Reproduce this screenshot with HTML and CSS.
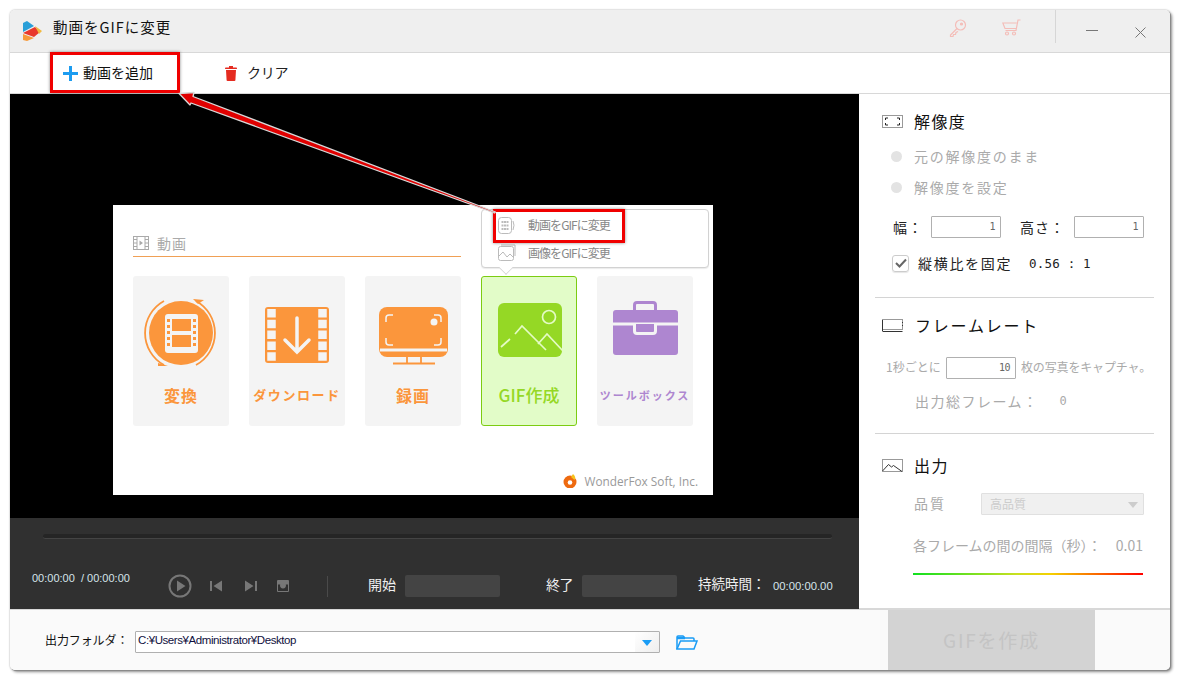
FILE: index.html
```html
<!DOCTYPE html>
<html lang="ja">
<head>
<meta charset="utf-8">
<title>動画をGIFに変更</title>
<link rel="stylesheet" href="styles.css">
</head>
<body>
<div class="window">
  <header class="titlebar">
    <svg class="logo" viewBox="0 0 20 20">
      <polygon points="1,2 5,0 12,5 1,11" fill="#2a9fd8"/>
      <polygon points="1,12 13,6 18,11 12,16" fill="#e8382c"/>
      <polygon points="1,13 12,17 5,20 1,19" fill="#f79a3a"/>
      <polygon points="13,5 20,10 17,13" fill="#f2b93f"/>
    </svg>
    <span class="title">動画をGIFに変更</span>
    <svg class="tb-key" viewBox="0 0 18 18" fill="none" stroke="#f4bdb8" stroke-width="1.2">
      <circle cx="11.5" cy="6" r="5"/><circle cx="12.5" cy="5" r="1" fill="#f4bdb8"/>
      <path d="M8 9.5 1.5 16v1.5h2.500l.5-2h2l.5-2 2-1"/>
    </svg>
    <svg class="tb-cart" viewBox="0 0 19 17" fill="none" stroke="#f4bdb8" stroke-width="1.200">
      <path d="M18.500 1h-2.500l-2 10.500H3.500"/><path d="M14.800 4H.8l2.200 5.500h11"/>
      <circle cx="5" cy="14.500" r="1.500"/><circle cx="12" cy="14.500" r="1.500"/>
    </svg>
    <i class="tb-sep"></i>
    <i class="tb-min"></i>
    <svg class="tb-close" viewBox="0 0 11 11" stroke="#777" stroke-width="1"><path d="M.5.5l10 10M10.500.5l-10 10"/></svg>
  </header>

  <nav class="toolbar">
    <svg class="ic-plus" viewBox="0 0 15 15"><path d="M6 0h3v6h6v3H9v6H6V9H0V6h6z" fill="#1c9cf0"/></svg>
    <span class="tool-add">動画を追加</span>
    <svg class="ic-trash" viewBox="0 0 12 15"><path d="M4 0h4v1.500h3.500q.5 0 .5 1.500H0q0-1.500.5-1.500H4zM1 4h10l-.6 10.200q0 .8-1 .8H2.600q-1 0-1-.8z" fill="#e52b20"/></svg>
    <span class="tool-clear">クリア</span>
  </nav>

  <main class="main">
    <section class="left">
      <div class="video">
        <div class="shot">
          <div class="shot-head">
            <svg class="ic-film" viewBox="0 0 16 14" fill="none" stroke="#aaa"><rect x=".5" y=".5" width="15" height="13"/><path d="M4 .5v13M12 .5v13M.5 3.500H4M.5 7H4M.5 10.500H4M12 3.500h3.500M12 7h3.500M12 10.500h3.500"/><path d="M6.500 4.500v5l3.500-2.500z" fill="#aaa" stroke="none"/></svg>
            <span>動画</span>
          </div>
          <div class="tiles">
            <div class="tile orange">
              <svg class="tile-ic" viewBox="0 0 96 66">
                <circle cx="48" cy="35" r="32" fill="#fb963c"/>
                <path d="M31 3A36.500 36.500 0 0 0 31 67M63 3A36.500 36.500 0 0 1 63 67" fill="none" stroke="#fb963c" stroke-width="1.800"/>
                <polygon points="60,1 71,2 65,6" fill="#fb963c"/><polygon points="25,65 35,68 25,68" fill="#fb963c"/>
                <rect x="32" y="16" width="33" height="39" rx="3" fill="#f4f4f4"/>
                <rect x="39" y="21" width="19" height="12" fill="#fb963c"/><rect x="39" y="37" width="19" height="12" fill="#fb963c"/>
                <path d="M35.500 21v28M61.500 21v28" stroke="#fb963c" stroke-width="3" stroke-dasharray="3 3" fill="none"/>
              </svg>
              <span class="tile-label big">変換</span>
            </div>
            <div class="tile orange">
              <svg class="tile-ic" viewBox="0 0 96 66">
                <rect x="16" y="9" width="64" height="56" rx="3" fill="#fb963c"/>
                <path d="M22.500 11v52M73.500 11v52" stroke="#f4f4f4" stroke-width="8.500" stroke-dasharray="8.500 2.300" fill="none"/>
                <path d="M48 20v34M36 42l12 12 12-12" stroke="#f4f4f4" stroke-width="3.500" stroke-linecap="round" fill="none"/>
              </svg>
              <span class="tile-label dl">ダウンロード</span>
            </div>
            <div class="tile orange">
              <svg class="tile-ic" viewBox="0 0 96 66">
                <rect x="14" y="9" width="69" height="50" rx="8" fill="#fb963c"/>
                <path d="M15 52h67" stroke="#f4f4f4" stroke-width="3"/>
                <path d="M42 59v6M56 59v6M28 65.500h42" stroke="#fb963c" stroke-width="1.800"/>
                <path d="M21 24v-4q0-3 3-3h4M76 24v-4q0-3-3-3h-4M21 40v4q0 3 3 3h4M76 40v4q0 3-3 3h-4" stroke="#f4f4f4" stroke-width="1.500" fill="none"/>
                <circle cx="69" cy="24" r="3.500" fill="#f4f4f4"/>
              </svg>
              <span class="tile-label big">録画</span>
            </div>
            <div class="tile active">
              <svg class="tile-ic" viewBox="0 0 96 66">
                <rect x="17" y="5" width="64" height="54" rx="6" fill="#95d825"/>
                <circle cx="68" cy="19" r="6.500" fill="none" stroke="#e4fbc5" stroke-width="1.700"/>
                <path d="M20 49l9-8M34 36l7-8 24 24M57 46l9-10 16 17" fill="none" stroke="#e4fbc5" stroke-width="1.700"/>
              </svg>
              <span class="tile-label gif">GIF作成</span>
            </div>
            <div class="tile purple">
              <svg class="tile-ic" viewBox="0 0 96 66">
                <path d="M37.500 12V7q0-2.500 2.500-2.500h16q2.500 0 2.500 2.500v5" fill="none" stroke="#ae86d0" stroke-width="3"/>
                <rect x="16" y="12" width="65" height="45" rx="3" fill="#ae86d0"/>
                <path d="M16 26h65" stroke="#f4f4f4" stroke-width="3"/>
                <path d="M37.500 26v7q0 2.500 2.500 2.500h16q2.500 0 2.500-2.500v-7" fill="#ae86d0" stroke="#f4f4f4" stroke-width="3"/>
              </svg>
              <span class="tile-label tool">ツールボックス</span>
            </div>
          </div>
          <div class="brand">
            <svg class="brand-ic" viewBox="0 0 14 14"><circle cx="7" cy="8" r="6.500" fill="#ee6a10"/><circle cx="7" cy="8.500" r="2.300" fill="#fff"/><path d="M10 0q3.500 3 1.500 6L8 3z" fill="#f6c21c"/></svg>
            <span>WonderFox Soft, Inc.</span>
          </div>
          <div class="popup">
            <div class="pop-row">
              <svg class="pop-ic" viewBox="0 0 18 17" fill="none" stroke="#bbb"><rect x=".5" y=".5" width="13" height="16" rx="3"/><path d="M4.500 4v9M7 4v9M9.500 4v9" stroke-width="2" stroke-dasharray="2 1.500"/><path d="M15 4q2 4 0 9"/></svg>
              <span>動画をGIFに変更</span>
            </div>
            <div class="pop-row">
              <svg class="pop-ic" viewBox="0 0 18 17" fill="none" stroke="#bbb"><rect x=".5" y="2.500" width="15" height="14" rx="2"/><path d="M1 12l4-4 4 5 3-3 3 3M3 1h14v11"/></svg>
              <span>画像をGIFに変更</span>
            </div>
            <i class="pop-tail"></i>
          </div>
        </div>
      </div>
      <div class="controls">
        <div class="seek"></div>
        <div class="ctl-row">
          <span class="time">00:00:00 &nbsp;/ 00:00:00</span>
          <svg class="ic-play" viewBox="0 0 24 24" fill="none"><circle cx="12" cy="12" r="10.500" stroke="#777" stroke-width="2"/><path d="M9 6.500v11l8.500-5.500z" fill="#777"/></svg>
          <svg class="ic-prev" viewBox="0 0 12 12"><path d="M0 1h2v10H0zM12 .5v11L3.500 6z" fill="#777"/></svg>
          <svg class="ic-next" viewBox="0 0 12 12"><path d="M12 1h-2v10h2zM0 .5v11L8.500 6z" fill="#777"/></svg>
          <svg class="ic-cam" viewBox="0 0 12 12"><path d="M1 0h10q1 0 1 1v10q0 1-1 1H1q-1 0-1-1V1q0-1 1-1zm0 4.500V11h10V4.500H8.800a3 3 0 1 1-5.600 0z" fill="#777" fill-rule="evenodd"/><circle cx="6" cy="6" r="1.500" fill="#777"/></svg>
          <i class="ctl-sep"></i>
          <span class="ctl-start">開始</span>
          <span class="ctl-field f-start"></span>
          <span class="ctl-end">終了</span>
          <span class="ctl-field f-end"></span>
          <span class="ctl-dur">持続時間：</span>
          <span class="ctl-durv">00:00:00.00</span>
        </div>
      </div>
    </section>

    <aside class="panel">
      <div class="sec s1">
        <div class="head">
          <svg class="head-ic" viewBox="0 0 21 13" fill="none" stroke="#999"><rect x=".5" y=".5" width="20" height="12"/><path d="M6 3H3.500v2M15 3h2.500v2M6 10H3.500V8M15 10h2.500V8" stroke="#222"/></svg>
          <span class="h-text">解像度</span>
        </div>
        <label class="radio r1"><i class="dot"></i>元の解像度のまま</label>
        <label class="radio r2"><i class="dot"></i>解像度を設定</label>
        <div class="dims">
          <span class="d-w">幅：</span><span class="num">1</span>
          <span class="d-h">高さ：</span><span class="num">1</span>
        </div>
        <div class="lock">
          <span class="chk"><svg viewBox="0 0 12 10" fill="none" stroke="#666" stroke-width="2"><path d="M1 5l3.500 3.500L11 1.500"/></svg></span>
          <span class="lock-t">縦横比を固定</span>
          <span class="lock-v">0.56 : 1</span>
        </div>
      </div>
      <div class="sec s2">
        <div class="head">
          <svg class="head-ic" viewBox="0 0 21 13" fill="none" stroke="#999"><rect x=".5" y=".5" width="20" height="10"/><path d="M.5 12.500h20M.5 1v11M20.500 3v1M20.500 6v1" stroke="#333"/></svg>
          <span class="h-text fr">フレームレート</span>
        </div>
        <div class="rate">
          <span class="r-a">1秒ごとに</span><span class="num">10</span><span class="r-b">枚の写真をキャプチャ。</span>
        </div>
        <div class="total"><span>出力総フレーム：</span><span class="total-v">0</span></div>
      </div>
      <div class="sec s3">
        <div class="head">
          <svg class="head-ic" viewBox="0 0 21 13" fill="none" stroke="#999"><rect x=".5" y=".5" width="20" height="12"/><path d="M.5 12l6-6.500 3 2.500 2-1.500 8.500 6" stroke="#333"/></svg>
          <span class="h-text">出力</span>
        </div>
        <div class="quality">
          <span class="q-l">品質</span>
          <span class="select">高品質<i class="sel-arrow"></i></span>
        </div>
        <div class="interval"><span>各フレームの間の間隔（秒）：</span><span>0.01</span></div>
        <div class="grad"></div>
      </div>
    </aside>
  </main>

  <footer class="bottom">
    <span class="out-l">出力フォルダ：</span>
    <div class="path">
      <span class="path-t">C:¥Users¥Administrator¥Desktop</span>
      <span class="path-drop"><i></i></span>
    </div>
    <svg class="ic-folder" viewBox="0 0 22 15" fill="none" stroke="#1a9cf5" stroke-width="1.500"><path d="M1 14V2q0-1 1-1h5l2 2h8q1 0 1 1v2"/><path d="M1 14 4.500 6H21l-3 8z"/><path d="M1 3h8" stroke-width="2.500"/></svg>
    <button class="make" type="button">GIFを作成</button>
  </footer>

  <i class="mark mark-add"></i>
  <i class="mark mark-pop"></i>
  <svg class="arrow" viewBox="0 0 1160 660">
    <polygon points="169,83.500 184,82.500 183,86.500 485.500,202 484.500,203 181,93 180,95" fill="#e00000" stroke="#d8d8d8" stroke-width="1.300" stroke-linejoin="round"/>
  </svg>
</div>
</body>
</html>
```

FILE: styles.css
```css
* { box-sizing: border-box; }
html, body { margin: 0; padding: 0; background: #fff; }
body { width: 1180px; height: 680px; overflow: hidden; font-family: "Noto Sans CJK JP", "Noto Sans", sans-serif; }
i { display: block; }
svg { display: block; flex: none; }

.window {
  position: relative; width: 1160px; height: 660px; margin: 10px;
  display: flex; flex-direction: column; overflow: visible;
  border-radius: 5px; background: #fff;
  box-shadow: 1px 1px 0 #8a8a8a, 2px 2px 3px rgba(0,0,0,.45), 0 0 2px rgba(0,0,0,.35);
}

/* title bar */
.titlebar {
  height: 43px; flex: none; display: flex; align-items: center;
  background: #efefef; border-bottom: 1px solid #d8d8d8; border-radius: 5px 5px 0 0; padding-left: 12px;
}
.logo { width: 20px; height: 20px; margin-top: 0; }
.title { width: 118px; margin-left: 11px; font-size: 14.500px; line-height: 20px; color: #111; margin-top: -8px; letter-spacing: 1px; white-space: nowrap; }
.tb-key { width: 18px; height: 18px; margin-left: 778px; margin-top: -7px; }
.tb-cart { width: 19px; height: 17px; margin-left: 35px; margin-top: -7px; }
.tb-sep { width: 1px; height: 33px; background: #d6d6d6; margin-left: 34px; margin-top: -10px; }
.tb-min { width: 12px; height: 1px; background: #777; margin-left: 30px; margin-top: -2px; }
.tb-close { width: 11px; height: 11px; margin-left: 37px; margin-top: 2px; }

/* toolbar */
.toolbar { height: 41px; flex: none; display: flex; align-items: center; background: #fff; border-bottom: 1px solid #d8d8d8; padding-left: 53px; }
.ic-plus { width: 15px; height: 15px; margin-top: 1px; }
.tool-add { margin-left: 5px; font-size: 14px; line-height: 20px; color: #111; margin-top: -2px; }
.ic-trash { width: 12px; height: 15px; margin-left: 72px; margin-top: 1px; }
.tool-clear { margin-left: 10px; font-size: 14px; line-height: 20px; color: #222; letter-spacing: -.3px; margin-top: -2px; }

/* main */
.main { flex: 1; display: flex; min-height: 0; }
.left { width: 849px; flex: none; display: flex; flex-direction: column; }
.video { height: 424px; flex: none; background: #000; padding: 111px 0 0 103px; }
.shot { position: relative; width: 600px; height: 290px; background: #fff; padding: 20px; }
.shot-head { display: flex; align-items: center; height: 32px; width: 328px; border-bottom: 1px solid #f0a055; padding-top: 4px; font-size: 14px; color: #aaa; letter-spacing: 1px; }
.ic-film { width: 16px; height: 14px; margin-right: 8px; }
.tiles { display: flex; gap: 20px; margin-top: 19px; }
.tile { width: 96px; height: 150px; border-radius: 3px; background: #f4f4f4; display: flex; flex-direction: column; align-items: center; padding-top: 22px; font-weight: 700; }
.tile.active { background: #e2fcc8; border: 1px solid #7ccc12; padding-top: 21px; }
.tile.active .tile-ic { margin: 0 -1px; }
.tile-ic { width: 96px; height: 66px; flex: none; overflow: visible; }
.tile-label { display: block; margin-top: 21px; height: 20px; line-height: 20px; white-space: nowrap; }
.orange { color: #fb963c; }
.purple { color: #ae86d0; }
.big { font-size: 16px; letter-spacing: 1px; }
.dl { font-size: 13px; letter-spacing: 1.600px; }
.gif { font-size: 17px; font-weight: 500; color: #95d825; }
.tool { font-size: 11px; letter-spacing: 2px; }

.brand { position: absolute; right: 15px; bottom: 6px; display: flex; align-items: center; gap: 8px; font-family: "Open Sans", "Noto Sans", sans-serif; font-size: 11.800px; color: #999; line-height: 16px; }
.brand-ic { width: 14px; height: 14px; }

.popup { position: absolute; left: 368px; top: 4px; width: 228px; height: 59px; background: #fff; border: 1px solid #d2d2d2; border-radius: 4px; padding: 2px 0 0 16px; box-shadow: 0 1px 1px rgba(0,0,0,.08); }
.pop-row { display: flex; align-items: center; height: 27px; font-size: 12px; color: #888; letter-spacing: -.95px; }
.pop-row:first-child span { margin-top: -2px; }
.pop-ic { width: 18px; height: 17px; margin-right: 12px; }
.pop-tail { position: absolute; left: 18px; bottom: -7px; width: 12px; height: 12px; background: #fff; border-right: 1px solid #d2d2d2; border-bottom: 1px solid #d2d2d2; transform: rotate(45deg) scale(.8); }

/* controls */
.controls { flex: 1; background: #303030; padding: 16px 0 0 22px; }
.seek { width: 789px; height: 5px; border-radius: 3px; background: #252525; border-bottom: 1px solid #444; margin-left: 11px; }
.ctl-row { display: flex; align-items: center; height: 22px; margin-top: 36px; color: #eee; font-size: 14px; }
.time { font-family: "Liberation Sans", sans-serif; font-size: 11px; color: #d5e4ea; width: 136px; margin-top: -16px; white-space: nowrap; }
.ic-play { width: 24px; height: 24px; margin-left: 0; }
.ic-prev { width: 12px; height: 12px; margin-left: 18px; }
.ic-next { width: 12px; height: 12px; margin-left: 23px; }
.ic-cam { width: 12px; height: 12px; margin-left: 20px; }
.ctl-sep { width: 1px; height: 21px; background: #4a4a4a; margin-left: 38px; }
.ctl-start { margin-left: 40px; width: 28px; margin-top: -4px; }
.ctl-field { width: 95px; height: 22px; background: #444; border-radius: 2px; }
.f-start { margin-left: 9px; }
.ctl-end { margin-left: 46px; width: 27px; letter-spacing: -.5px; white-space: nowrap; margin-top: -4px; }
.f-end { margin-left: 9px; }
.ctl-dur { margin-left: 21px; width: 75px; font-size: 13.500px; white-space: nowrap; margin-top: -6px; }
.ctl-durv { font-family: "Liberation Sans", sans-serif; font-size: 11.300px; color: #d5e4ea; white-space: nowrap; }

/* right panel */
.panel { flex: 1; background: #fff; border-top: 2px solid #fff; padding: 1px 16px 0; border-bottom: 1px solid #d8d8d8; font-size: 14px; color: #aaa; }
.sec { border-bottom: 1px solid #d4d4d4; }
.s3 { border-bottom: 0; }
.s1 { padding-bottom: 25px; }
.s2 { padding-bottom: 22px; }
.head { display: flex; align-items: center; height: 24px; padding-left: 7px; color: #111; }
.s1 .head { margin-top: 12px; }
.s2 .head { margin-top: 15px; }
.s3 .head { margin-top: 19px; }
.head-ic { width: 21px; height: 13px; }
.h-text { margin-left: 11px; font-size: 16px; letter-spacing: 1.400px; white-space: nowrap; }
.fr { margin-left: 12px; letter-spacing: 1.800px; }

.radio { display: flex; align-items: center; height: 20px; padding-left: 16px; letter-spacing: 1.750px; white-space: nowrap; }
.r1 { margin-top: 13px; }
.r2 { margin-top: 11px; }
.dot { width: 11px; height: 11px; border-radius: 50%; background: #e3e3e3; margin-right: 12px; }

.dims { display: flex; align-items: center; height: 22px; margin-top: 19px; padding-left: 18px; color: #222; white-space: nowrap; }
.d-w { width: 38px; letter-spacing: 1px; }
.d-h { width: 54px; margin-left: 19px; letter-spacing: 1px; }
.num { display: block; width: 70px; height: 22px; border: 1px solid #b0b0b0; border-radius: 1px; text-align: right; padding-right: 5px; font-family: "DejaVu Sans Mono", monospace; font-size: 10px; line-height: 20px; color: #666; background: #fff; letter-spacing: -.5px; }

.lock { display: flex; align-items: center; height: 18px; margin-top: 16px; padding-left: 17px; color: #222; white-space: nowrap; }
.chk { width: 17px; height: 17px; border: 1px solid #ccc; border-radius: 3px; display: flex; align-items: center; justify-content: center; box-shadow: 0 1px 1px rgba(0,0,0,.1); }
.chk svg { width: 12px; height: 10px; }
.lock-t { margin-left: 9px; width: 94px; letter-spacing: 1.700px; }
.lock-v { margin-left: 17px; font-family: "DejaVu Sans Mono", monospace; font-size: 12.500px; letter-spacing: .2px; }

.rate { display: flex; align-items: center; height: 22px; margin-top: 20px; padding-left: 11px; font-size: 12px; white-space: nowrap; }
.r-a { width: 60px; margin-top: -3px; }
.r-b { margin-left: 5px; font-size: 12px; letter-spacing: -.15px; margin-top: -3px; }
.total { display: flex; align-items: center; height: 20px; margin-top: 12px; padding-left: 40px; letter-spacing: 1.500px; white-space: nowrap; }
.total-v { margin-left: 21px; font-family: "DejaVu Sans Mono", monospace; font-size: 12px; }

.quality { display: flex; align-items: center; height: 22px; margin-top: 16px; padding-left: 39px; }
.q-l { width: 67px; letter-spacing: 2px; margin-top: -2px; }
.select { position: relative; display: block; width: 163px; height: 22px; background: #f0f0f0; border: 1px solid #e0e0e0; border-radius: 1px; font-size: 12px; line-height: 20px; color: #ccc; padding-left: 8px; }
.sel-arrow { position: absolute; right: 5px; top: 8px; width: 0; height: 0; border: 5.500px solid transparent; border-top: 6px solid #ccc; border-bottom: 0; }
.interval { display: flex; justify-content: space-between; align-items: center; height: 20px; width: 230px; margin: 20px 0 0 38px; font-size: 14px; white-space: nowrap; }
.grad { width: 230px; height: 2px; margin: 18px 0 0 38px; background: linear-gradient(90deg, #10e020, #c8e020 45%, #f5d000 60%, #f00); }

/* bottom */
.bottom { height: 61px; flex: none; display: flex; align-items: center; background: #fafafa; border-top: 1px solid #d8d8d8; padding-left: 35px; border-radius: 0 0 5px 5px; }
.out-l { width: 90px; font-size: 12px; color: #111; white-space: nowrap; letter-spacing: -.1px; margin-top: -2px; }
.path { display: flex; align-items: stretch; justify-content: space-between; width: 525px; height: 22px; margin-top: 4px; background: #fff; border: 1px solid #b0b0b0; border-radius: 1px; }
.path-t { font-family: "Liberation Sans", sans-serif; font-size: 11.500px; line-height: 17px; color: #101040; padding-left: 2px; letter-spacing: -.42px; }
.path-drop { position: relative; width: 24px; background: linear-gradient(135deg, #fff, #eee); }
.path-drop i { position: absolute; left: 7px; top: 8px; width: 0; height: 0; border: 5.500px solid transparent; border-top: 6px solid #1a9cf5; border-bottom: 0; }
.ic-folder { width: 22px; height: 15px; margin-left: 16px; margin-top: 5px; }
.make { width: 207px; height: 60px; margin-left: 190px; border: 0; background: #d3d3d3; color: #c4c4c4; font-family: "Noto Sans CJK JP", sans-serif; font-size: 19px; letter-spacing: 1.800px; padding: 0 0 2px; }

/* annotation overlay */
.mark { position: absolute; border: 3px solid #f00000; box-shadow: 0 0 3px rgba(0,0,0,.45); }
.mark-add { left: 40px; top: 42px; width: 130px; height: 41px; }
.mark-pop { left: 483px; top: 199px; width: 132px; height: 34px; }
.arrow { position: absolute; left: 0; top: 0; width: 1160px; height: 660px; pointer-events: none; }
```
